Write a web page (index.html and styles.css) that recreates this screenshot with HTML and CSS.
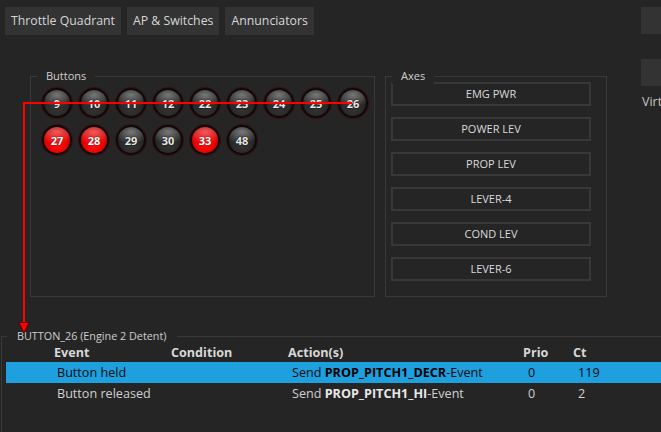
FILE: index.html
```html
<!DOCTYPE html>
<html>
<head>
<meta charset="utf-8">
<link rel="stylesheet" href="styles.css">
</head>
<body>
<div class="app">
  <div class="upper">
    <div class="main">
      <div class="tabs">
        <div class="tab">Throttle Quadrant</div>
        <div class="tab">AP &amp; Switches</div>
        <div class="tab">Annunciators</div>
      </div>
      <div class="panels">
        <div class="group buttons-group">
          <div class="group-title">Buttons</div>
          <div class="balls">
            <div class="ball">9</div>
            <div class="ball">10</div>
            <div class="ball">11</div>
            <div class="ball">12</div>
            <div class="ball">22</div>
            <div class="ball">23</div>
            <div class="ball">24</div>
            <div class="ball">25</div>
            <div class="ball">26</div>
            <div class="ball on">27</div>
            <div class="ball on">28</div>
            <div class="ball">29</div>
            <div class="ball">30</div>
            <div class="ball on">33</div>
            <div class="ball">48</div>
          </div>
        </div>
        <div class="group axes-group">
          <div class="group-title">Axes</div>
          <div class="axes">
            <div class="axis">EMG PWR</div>
            <div class="axis">POWER LEV</div>
            <div class="axis">PROP LEV</div>
            <div class="axis">LEVER-4</div>
            <div class="axis">COND LEV</div>
            <div class="axis">LEVER-6</div>
          </div>
        </div>
      </div>
    </div>
    <div class="side">
      <div class="side-box"></div>
      <div class="side-box second"></div>
      <div class="side-text">Virt</div>
    </div>
  </div>

  <div class="group event-group">
    <div class="group-title event-title">BUTTON_26 (Engine 2 Detent)</div>
    <div class="table">
      <div class="row head">
        <div class="c c0"></div>
        <div class="c c1">Event</div>
        <div class="c c2">Condition</div>
        <div class="c c3">Action(s)</div>
        <div class="c c4">Prio</div>
        <div class="c c5">Ct</div>
      </div>
      <div class="row body selected">
        <div class="c c0"></div>
        <div class="c c1">Button held</div>
        <div class="c c2"></div>
        <div class="c c3">Send <b>PROP_PITCH1_DECR</b>-Event</div>
        <div class="c c4">0</div>
        <div class="c c5">119</div>
      </div>
      <div class="row body">
        <div class="c c0"></div>
        <div class="c c1">Button released</div>
        <div class="c c2"></div>
        <div class="c c3">Send <b>PROP_PITCH1_HI</b>-Event</div>
        <div class="c c4">0</div>
        <div class="c c5">2</div>
      </div>
    </div>
  </div>
</div>

<svg class="link" width="661" height="432" viewBox="0 0 661 432">
  <path d="M352 103 H24 V323" fill="none" stroke="#ff0000" stroke-width="2"/>
  <polygon points="19,322.5 29,322.5 24,333" fill="#ff0000" stroke="#5a0000" stroke-width="0.8"/>
</svg>
</body>
</html>
```

FILE: styles.css
```css
html, body {
  margin: 0;
  padding: 0;
  background: #252525;
  overflow: hidden;
  width: 661px;
  height: 432px;
}

body {
  font-family: "Open Sans", "Noto Sans", sans-serif;
  font-size: 12px;
  color: #d4d4d4;
  position: relative;
}

.upper {
  display: flex;
  height: 297px;
}

.main {
  width: 641px;
  flex: none;
}

.tabs {
  display: flex;
  gap: 6px;
  padding: 7px 0 0 5px;
}

.tab {
  background: #333333;
  height: 28px;
  line-height: 28px;
  padding: 0 6px;
  font-size: 12.3px;
  color: #d6d6d6;
  white-space: nowrap;
}

.panels {
  display: flex;
  gap: 10px;
  margin: 41px 0 0 30px;
}

.group {
  position: relative;
  border: 1px solid #393939;
  box-sizing: border-box;
}

.group-title {
  position: absolute;
  top: -9px;
  left: 6px;
  padding: 0 9px;
  background: #252525;
  font-size: 11px;
  line-height: 16px;
  color: #cfcfcf;
}

.buttons-group {
  width: 345px;
  height: 221px;
  padding: 11px 0 0 11px;
}

.balls {
  display: grid;
  grid-template-columns: repeat(9, 30px);
  gap: 7px;
}

.ball {
  width: 30px;
  height: 30px;
  box-sizing: border-box;
  border-radius: 50%;
  border: 2px solid #0b0b0b;
  box-shadow: 0 0 0 1px #3e0b0b;
  background:
    radial-gradient(ellipse 78% 45% at 50% 18%, rgba(255,255,255,0.38), rgba(255,255,255,0) 100%),
    radial-gradient(circle at 50% 65%, #363636 0%, #2a2a2a 45%, #1a1a1a 75%, #0a0a0a 100%);
  color: #e6e6e6;
  font-weight: 700;
  font-size: 11px;
  display: flex;
  align-items: center;
  justify-content: center;
  text-shadow: 0 0 2px #000;
}

.ball.on {
  background:
    radial-gradient(ellipse 78% 45% at 50% 18%, rgba(255,200,200,0.45), rgba(255,120,120,0) 100%),
    radial-gradient(circle at 50% 62%, #ff1a1a 0%, #ee0000 45%, #b80000 78%, #6a0000 100%);
  color: #ffffff;
  text-shadow: 0 0 2px #500;
}

.axes-group {
  width: 222px;
  height: 221px;
  padding: 5px 0 0 5px;
}

.axes {
  display: flex;
  flex-direction: column;
  gap: 11px;
}

.axis {
  width: 200px;
  height: 24px;
  box-sizing: border-box;
  border: 2px solid #383838;
  text-align: center;
  line-height: 20px;
  font-size: 11px;
  color: #dadada;
}

.side {
  display: flex;
  flex-direction: column;
  padding-top: 7px;
  overflow: hidden;
}

.side-box {
  width: 20px;
  height: 27px;
  background: #333333;
}

.side-box.second {
  margin-top: 25px;
}

.side-text {
  margin-top: 7px;
  padding-left: 1px;
  color: #c4c4c4;
  white-space: nowrap;
  font-size: 12.5px;
}

.event-group {
  margin: 39px 0 0 1px;
  width: 660px;
  height: 96px;
  border-right: none;
  border-bottom: none;
  padding: 6px 0 0 4px;
}

.event-title {
  left: 5px;
  padding: 0 11px 0 10px;
  font-size: 10.8px;
}

.row {
  display: grid;
  grid-template-columns: 48px 117px 117px 235px 50px 1fr;
  white-space: nowrap;
  font-size: 12.6px;
}

.row.head {
  height: 19px;
  line-height: 19px;
  font-weight: 700;
  color: #d8d8d8;
}

.row.body {
  height: 21px;
  line-height: 21px;
  color: #d0d0d0;
}

.row.body .c1 { padding-left: 3px; }
.row.body .c3 { padding-left: 4px; }
.row.body .c4 { padding-left: 5px; }
.row.body .c5 { padding-left: 5px; }

.row.body b {
  font-weight: 700;
  color: #e8e8e8;
}

.row.selected {
  background: #1ea0df;
  color: #0a0a0a;
}

.row.selected b {
  color: #000;
}

.link {
  position: absolute;
  left: 0;
  top: 0;
  pointer-events: none;
}
```
